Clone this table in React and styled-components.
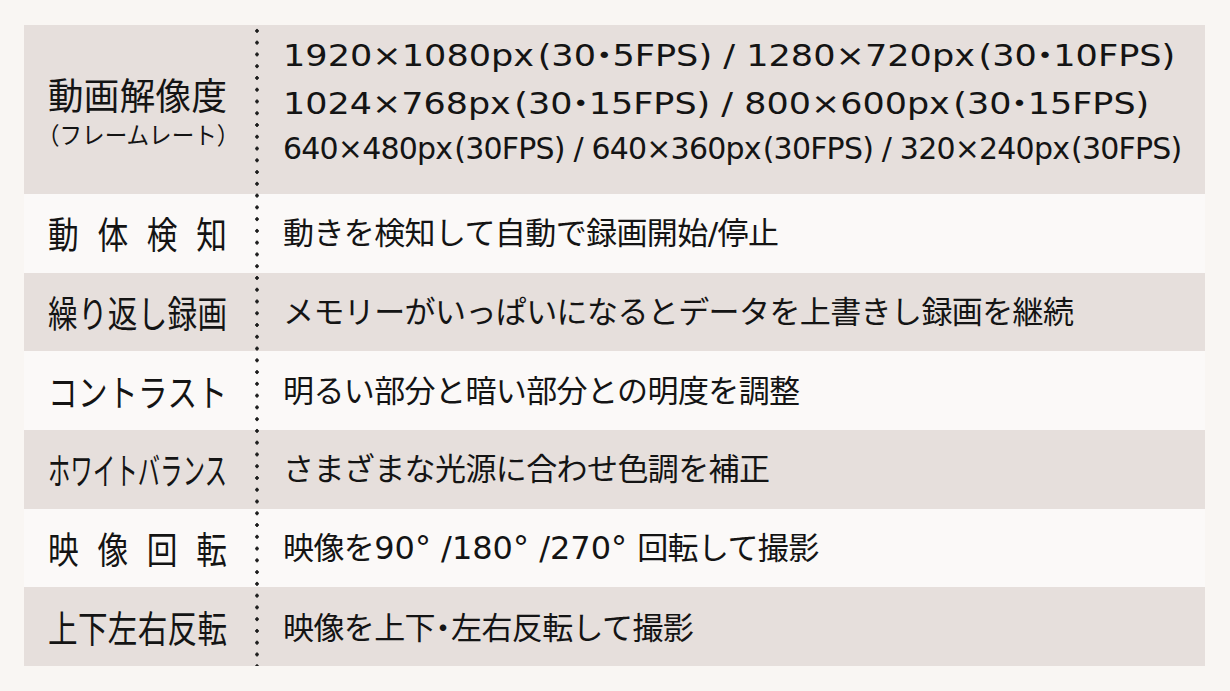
import React from 'react';
import styled, { createGlobalStyle } from 'styled-components';

const GlobalStyle = createGlobalStyle`
  body {
    margin: 0;
    background: #f9f6f3;
  }
`;

// table with the dotted divider drawn over the rows
const Table = styled.div`
  position: relative;
  margin: 25px 0 0 24px;
  width: 1181px;
  display: flex;
  flex-direction: column;
  color: #141414;

  &::after {
    content: '';
    position: absolute;
    left: 231px;
    top: 0;
    bottom: 0;
    width: 4px;
    background: radial-gradient(circle, #1c1c1c 1.5px, transparent 2px) 0 0 / 4px 11.77px repeat-y;
  }
`;

const Row = styled.div`
  display: grid;
  grid-template-columns: 233px 1fr;
  height: ${p => (p.$tall ? '169px' : '78.67px')};
  background: ${p => (p.$shade ? '#e6dfdc' : '#fbf9f8')};
  overflow: hidden;
`;

const LabelCell = styled.div`
  display: flex;
  flex-direction: column;
  justify-content: center;
  align-items: flex-start;
  padding-left: 24px;
`;

const Label = styled.div`
  font-family: "Noto Sans CJK JP", sans-serif;
  font-size: ${p => p.$size || 37}px;
  line-height: ${p => p.$lh || 44}px;
  margin-top: ${p => p.$mt || 0}px;
  margin-left: ${p => -(p.$bleed || 0)}px;
  width: ${p => (179 + 2 * (p.$bleed || 0)) / p.$scale}px;
  white-space: nowrap;
  text-align: justify;
  text-align-last: justify;
  transform: scaleX(${p => p.$scale});
  transform-origin: left center;
`;

const ValueCell = styled.div`
  display: flex;
  flex-direction: column;
  justify-content: center;
  align-items: flex-start;
  padding-left: 26px;
  padding-bottom: ${p => p.$pb || 0}px;
  font-family: "DejaVu Sans", "Noto Sans CJK JP", sans-serif;
  font-size: 31px;
  line-height: 40px;
  letter-spacing: -0.6px;
  white-space: nowrap;
`;

const SpecLine = styled.div`
  font-size: 30px;
  line-height: 45.5px;
  letter-spacing: ${p => p.$spacing || 0}px;
  transform: scaleX(${p => p.$scale || 1});
  transform-origin: left center;
`;

const Open = styled.span`
  margin-left: ${p => p.$gap || 3}px;
`;

const Dot = styled.span`
  display: inline-flex;
  justify-content: center;
  width: ${p => p.$w || 14}px;
  font-family: "Noto Sans CJK JP", sans-serif;
  letter-spacing: 0;
`;

const Latin = styled.span`
  font-size: 32px;
  letter-spacing: 0;
`;

const rows = [
  { label: '動 体 検 知', scale: 0.83, value: '動きを検知して自動で録画開始/停止' },
  { label: '繰り返し録画', scale: 0.8, value: 'メモリーがいっぱいになるとデータを上書きし録画を継続' },
  { label: 'コントラスト', scale: 0.8, value: '明るい部分と暗い部分との明度を調整' },
  { label: 'ホワイトバランス', scale: 0.6, value: 'さまざまな光源に合わせ色調を補正' },
  {
    label: '映 像 回 転',
    scale: 0.83,
    value: (
      <>
        映像を<Latin>90° /180° /270° </Latin>回転して撮影
      </>
    ),
  },
  {
    label: '上下左右反転',
    scale: 0.8,
    value: (
      <>
        映像を上下<Dot $w={16}>・</Dot>左右反転して撮影
      </>
    ),
  },
];

export default function App() {
  return (
    <>
      <GlobalStyle />
      <Table>
        <Row $tall $shade>
          <LabelCell>
            <Label $scale={0.96}>動画解像度</Label>
            <Label $scale={0.94} $size={24} $lh={29} $mt={3} $bleed={11}>（フレームレート）</Label>
          </LabelCell>
          <ValueCell $pb={16}>
            <SpecLine $scale={1.17}>
              1920×1080px<Open>(</Open>30<Dot>・</Dot>5FPS) / 1280×720px<Open>(</Open>30<Dot>・</Dot>10FPS)
            </SpecLine>
            <SpecLine $scale={1.165}>
              1024×768px<Open>(</Open>30<Dot>・</Dot>15FPS) / 800×600px<Open>(</Open>30<Dot>・</Dot>15FPS)
            </SpecLine>
            <SpecLine $spacing={-0.8}>
              640×480px<Open $gap={2}>(</Open>30FPS) / 640×360px<Open $gap={2}>(</Open>30FPS) / 320×240px<Open $gap={2}>(</Open>30FPS)
            </SpecLine>
          </ValueCell>
        </Row>
        {rows.map((r, i) => (
          <Row key={i} $shade={i % 2 === 1}>
            <LabelCell>
              <Label $scale={r.scale}>{r.label}</Label>
            </LabelCell>
            <ValueCell>
              <div>{r.value}</div>
            </ValueCell>
          </Row>
        ))}
      </Table>
    </>
  );
}
